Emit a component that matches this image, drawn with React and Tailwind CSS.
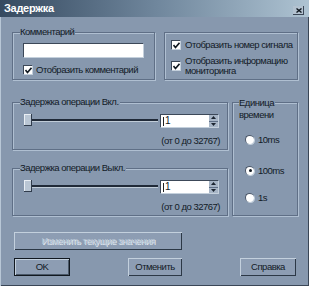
import React from "react";

const Group = ({ className = "", label, children }) => (
  <div className={"relative border border-[#5f6f86] shadow-[inset_1px_1px_0_#afbfd1,1px_1px_0_#afbfd1] " + className}>
    {label && (
      <span className="absolute left-[7px] top-[-7px] bg-[#8798ae] pr-[1px] leading-[12px] whitespace-pre">{label}</span>
    )}
    {children}
  </div>
);

const Check = () => (
  <div className="w-[9px] h-[9px] bg-white border-t border-l border-[#3c4858] shadow-[1px_1px_0_#c4d0dc] flex items-center justify-center shrink-0">
    <svg width="7" height="7" viewBox="0 0 7 7">
      <path d="M0.5 3 L2.5 5.5 L6.5 0.8" stroke="#101820" strokeWidth="1.6" fill="none" />
    </svg>
  </div>
);

const Radio = ({ checked }) => (
  <div className="w-[9px] h-[9px] rounded-full bg-white border-t border-l border-[#4a5668] shadow-[1px_1px_0_#c4d0dc] flex items-center justify-center shrink-0">
    {checked && <div className="w-[3px] h-[3px] rounded-full bg-[#101820]" />}
  </div>
);

const Spin = () => (
  <div className="w-[58px] h-[13px] bg-white border-t border-l border-[#3c4858] shadow-[1px_1px_0_#c4d0dc] flex">
    <div className="flex-1 flex items-center pl-[2px] leading-none text-[10px]">
      <span className="w-px h-[9px] bg-[#222]" />
      <span className="ml-[1px]">1</span>
    </div>
    <div className="w-[9px] flex flex-col">
      <div className="flex-1 bg-[#a7b5c6] border-b border-[#5f6f86] flex items-center justify-center">
        <svg width="5" height="3" viewBox="0 0 5 3"><path d="M0 3 L2.5 0 L5 3Z" fill="#1b2430" /></svg>
      </div>
      <div className="flex-1 bg-[#a7b5c6] flex items-center justify-center">
        <svg width="5" height="3" viewBox="0 0 5 3"><path d="M0 0 L2.5 3 L5 0Z" fill="#1b2430" /></svg>
      </div>
    </div>
  </div>
);

const Slider = () => (
  <div className="relative h-[13px] w-[205px] ml-[11px] mt-[11px] flex items-start">
    <div className="relative w-[136px] h-[13px]">
      <div className="absolute left-[3px] right-[2px] top-[5px] h-[2px] bg-[#202a38] shadow-[0_1px_0_#c0ccd8]" />
      <div className="absolute left-0 top-0 w-[8px] h-[12px] bg-[#b9c6d4] border-r border-b border-[#303c4c] shadow-[inset_1px_1px_0_#e8eef4]" />
    </div>
    <Spin />
  </div>
);

const Btn = ({ children, className = "", def }) => (
  <div
    className={
      "h-[18px] flex items-center justify-center bg-[#8d9db3] " +
      (def
        ? "border border-[#111820] shadow-[inset_1px_1px_0_#c3d0dd,inset_-1px_-1px_0_#4a5868]"
        : "shadow-[inset_1px_1px_0_#c3d0dd,inset_-1px_-1px_0_#2c3846]") +
      " " +
      className
    }
  >
    {children}
  </div>
);

export default function App() {
  return (
    <div className="w-[309px] h-[286px] bg-[#8798ae] overflow-hidden relative text-[9.5px] tracking-[-0.5px] text-[#121a26] font-['Liberation_Sans',Arial,sans-serif] shadow-[inset_1px_1px_0_#b8c7d6,inset_-1px_-1px_0_#3a4656]">
      {/* title bar */}
      <div className="h-[17px] flex items-center pl-[4px] bg-gradient-to-r from-[#364a60] via-[#6f869c] to-[#aec3d2]">
        <span className="text-white font-bold text-[11px] tracking-[-0.3px]">Задержка</span>
        <div className="ml-auto mr-[5px] mt-[3px] w-[11px] h-[9px] bg-[#b3c2d0] shadow-[inset_-1px_-1px_0_#3a4656] flex items-center justify-center">
          <svg width="6" height="5" viewBox="0 0 6 5"><path d="M0.5 0.5 L5.5 4.5 M5.5 0.5 L0.5 4.5" stroke="#101820" strokeWidth="1.4" /></svg>
        </div>
      </div>

      <div className="pl-[12px]">
        {/* row 1 */}
        <div className="flex gap-[9px] mt-[15px]">
          <Group label="Комментарий" className="w-[143px] h-[48px]">
            <div className="ml-[10px] mt-[10px] w-[120px] h-[14px] bg-white border-t border-l border-[#3c4858] shadow-[1px_1px_0_#c4d0dc]" />
            <div className="ml-[10px] mt-[8px] flex items-center gap-[4px] leading-none whitespace-nowrap">
              <Check />
              <span>Отобразить комментарий</span>
            </div>
          </Group>
          <Group className="w-[134px] h-[48px]">
            <div className="ml-[6px] mt-[7px] flex items-center gap-[5px] leading-none whitespace-nowrap">
              <Check />
              <span>Отобразить номер сигнала</span>
            </div>
            <div className="ml-[6px] mt-[6px] flex items-center gap-[5px] leading-[10px] whitespace-nowrap">
              <Check />
              <span>Отобразить информацию<br />мониторинга</span>
            </div>
          </Group>
        </div>

        {/* row 2 */}
        <div className="flex gap-[4px] mt-[22px]">
          <div className="flex flex-col w-[216px]">
            <Group label="Задержка операции Вкл." className="h-[48px]">
              <Slider />
              <div className="text-right pr-[7px] mt-[9px] leading-none">(от 0 до 32767)</div>
            </Group>
            <Group label="Задержка операции Выкл." className="h-[48px] mt-[18px]">
              <Slider />
              <div className="text-right pr-[7px] mt-[9px] leading-none">(от 0 до 32767)</div>
            </Group>
          </div>
          <Group className="w-[66px] h-[114px]">
            <span className="absolute left-[6px] top-[-6px] bg-[#8798ae] pr-[1px] leading-[12px]">Единица<br />времени</span>
            <div className="flex flex-col ml-[12px] mt-[32px] leading-none">
              <div className="flex items-center gap-[4px]"><Radio /><span>10ms</span></div>
              <div className="flex items-center gap-[4px] mt-[21px]"><Radio checked /><span>100ms</span></div>
              <div className="flex items-center gap-[4px] mt-[18px]"><Radio /><span>1s</span></div>
            </div>
          </Group>
        </div>

        {/* disabled button */}
        <Btn className="w-[168px] h-[17px] ml-[2px] mt-[16px] text-[#b7c5d4] [text-shadow:1px_1px_0_#e2eaf2]">
          Изменить текущие значения
        </Btn>

        {/* buttons */}
        <div className="flex mt-[8px] ml-[2px]">
          <Btn def className="w-[56px]">OK</Btn>
          <Btn className="w-[54px] ml-[58px]">Отменить</Btn>
          <Btn className="w-[56px] ml-[58px]">Справка</Btn>
        </div>
      </div>
    </div>
  );
}
